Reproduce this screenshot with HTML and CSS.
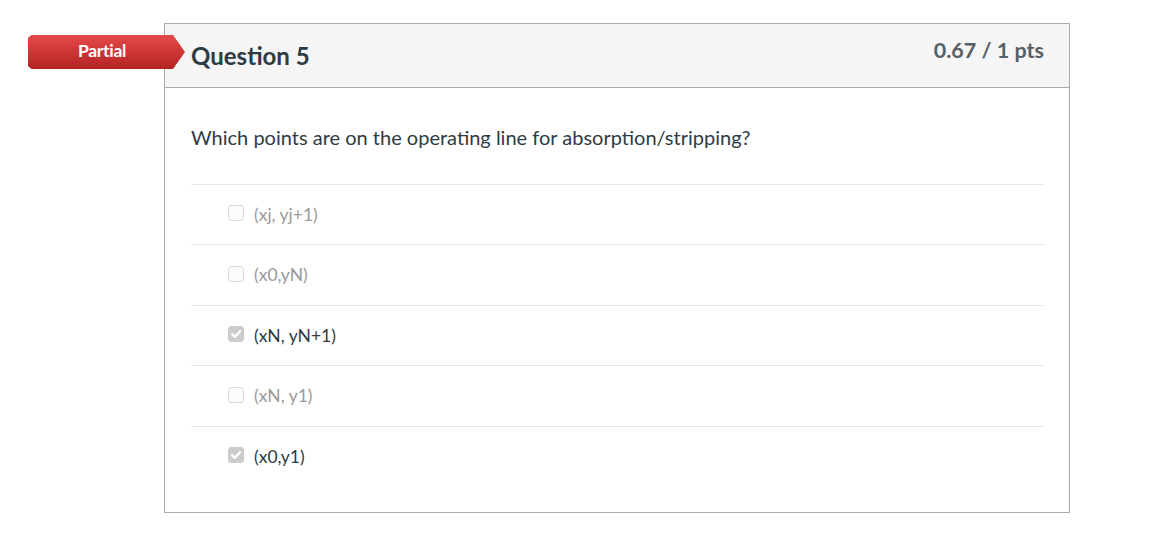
FILE: index.html
```html
<!DOCTYPE html>
<html>
<head>
<meta charset="utf-8">
<link rel="stylesheet" href="styles.css">
</head>
<body>
<div class="page">
  <div class="question">
    <div class="badge">Partial</div>
    <div class="q-header">
      <h2 class="q-title">Question 5</h2>
      <div class="q-points">0.67 / 1 pts</div>
    </div>
    <div class="q-body">
      <p class="q-text">Which points are on the operating line for absorption/stripping?</p>
      <div class="answers">
        <div class="answer">
          <span class="box"></span><span class="label">(xj, yj+1)</span>
        </div>
        <div class="answer">
          <span class="box"></span><span class="label">(x0,yN)</span>
        </div>
        <div class="answer selected">
          <span class="box checked"><svg viewBox="0 0 16 16" width="16" height="16"><path d="M3.4 8.2 L6.6 11.3 L12.6 4.8" fill="none" stroke="#fff" stroke-width="2.6" stroke-linecap="round" stroke-linejoin="round"/></svg></span><span class="label">(xN, yN+1)</span>
        </div>
        <div class="answer">
          <span class="box"></span><span class="label">(xN, y1)</span>
        </div>
        <div class="answer selected">
          <span class="box checked"><svg viewBox="0 0 16 16" width="16" height="16"><path d="M3.4 8.2 L6.6 11.3 L12.6 4.8" fill="none" stroke="#fff" stroke-width="2.6" stroke-linecap="round" stroke-linejoin="round"/></svg></span><span class="label">(x0,y1)</span>
        </div>
      </div>
    </div>
  </div>
</div>
</body>
</html>
```
FILE: styles.css
```css
html, body {
  margin: 0;
  padding: 0;
  background: #fff;
  font-family: Lato, "Noto Sans", sans-serif;
  color: #2d3b45;
}

.page {
  padding: 23px 0 0 164px;
}

.question {
  position: relative;
  width: 904px;
  height: 488px;
  border: 1px solid #aaaaaa;
  background: #fff;
}

.badge {
  position: absolute;
  left: -137px;
  top: 11px;
  width: 145px;
  height: 34px;
  padding-right: 12px;
  box-sizing: content-box;
  background: linear-gradient(#e54a4a, #b42222);
  clip-path: polygon(0 3px, 2px 1px, 4px 0, 145px 0, 157px 17px, 145px 34px, 4px 34px, 2px 33px, 0 31px);
  color: #fff;
  font-weight: 700;
  font-size: 17.5px;
  line-height: 32px;
  text-align: center;
  text-indent: 3px;
  letter-spacing: -0.3px;
}

.q-header {
  display: flex;
  justify-content: space-between;
  align-items: flex-start;
  height: 63px;
  background: #f5f5f5;
  border-bottom: 1px solid #aaaaaa;
  padding: 0 25px 0 26px;
}

.q-title {
  margin: 0;
  padding-top: 16px;
  font-size: 24px;
  font-weight: 700;
  line-height: 32px;
  color: #2d3b45;
}

.q-points {
  padding-top: 12px;
  font-size: 21.5px;
  font-weight: 700;
  line-height: 28px;
  color: #555f66;
}

.q-body {
  padding: 0 25px 0 26px;
}

.q-text {
  margin: 0;
  padding-top: 36px;
  height: 60px;
  font-size: 20px;
  line-height: 26px;
}

.answers {
  display: flex;
  flex-direction: column;
}

.answer {
  display: flex;
  align-items: center;
  border-top: 1px solid #e6e6e6;
  padding-left: 37px;
  color: #9a9a9a;
  font-size: 17.5px;
}

.answer:nth-child(2n) {
  height: 60px;
}

.answer:nth-child(2n+1) {
  height: 59px;
}

.answer.selected {
  color: #2d3b45;
}

.box {
  display: inline-flex;
  align-items: center;
  justify-content: center;
  width: 14px;
  height: 14px;
  border: 1px solid #dcdcdc;
  border-radius: 3px;
  background: #fbfbfb;
  margin-right: 10px;
  margin-top: -3px;
}

.box.checked {
  background: #cccccc;
  border-color: #cccccc;
}

.box svg {
  width: 14px;
  height: 14px;
}

.label {
  line-height: 20px;
}
```
